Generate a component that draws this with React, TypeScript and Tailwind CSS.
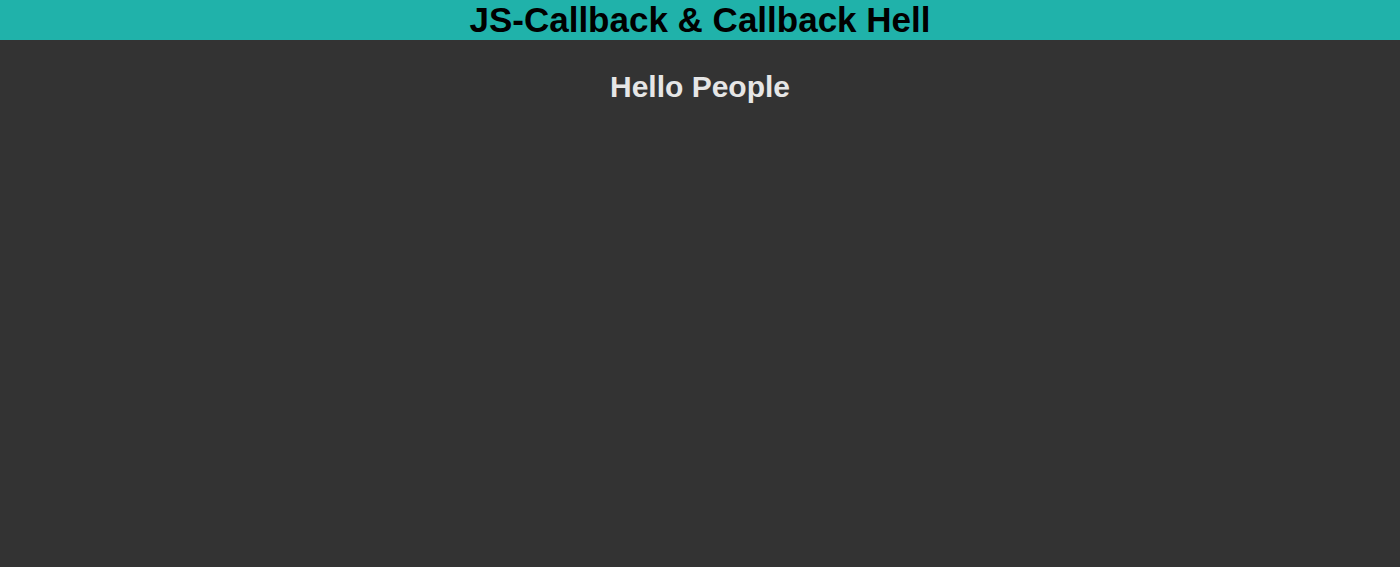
export default function App() {
  return (
    <div className="min-h-[567px] bg-[#333333] font-['Liberation_Sans',Arial,sans-serif]">
      <header className="h-10 bg-[#20b2aa] flex items-center justify-center overflow-hidden">
        <h1 className="text-[35px] font-bold leading-[40px] text-black">JS-Callback &amp; Callback Hell</h1>
      </header>
      <main className="pt-[30px] text-center">
        <h2 className="text-[30px] font-bold leading-[34px] text-[#e6e6e6]">Hello People</h2>
      </main>
    </div>
  );
}
